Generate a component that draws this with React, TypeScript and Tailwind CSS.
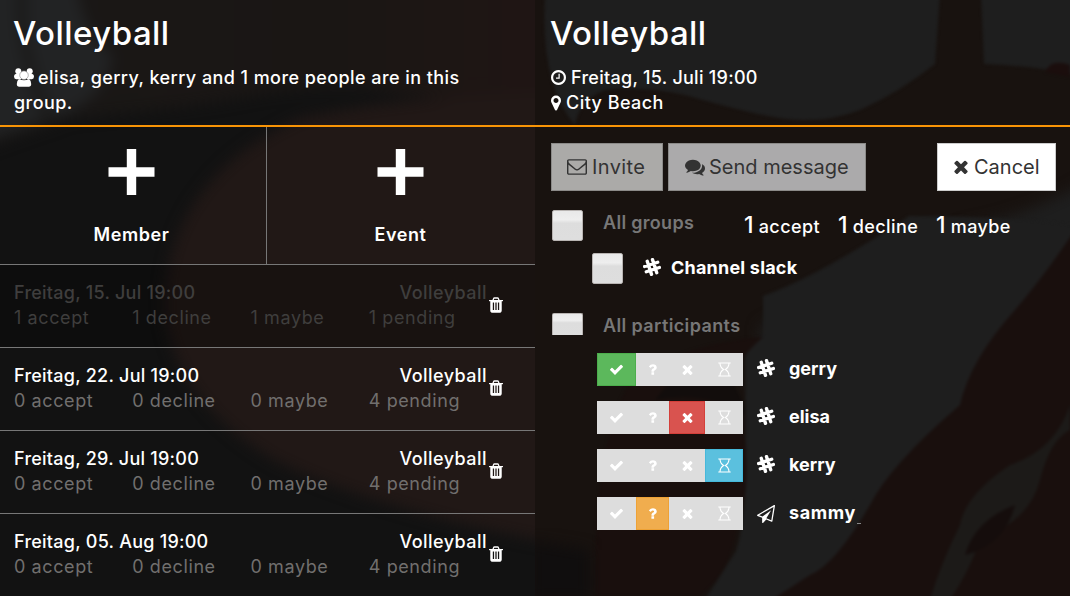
import type { ReactNode } from 'react';

type IconProps = { className?: string };

function Glyph({ d, className, box = '0 0 1792 1792' }: { d: string; className?: string; box?: string }) {
  return (
    <svg viewBox={box} fill="currentColor" className={className} aria-hidden="true">
      <path d={d} />
    </svg>
  );
}

const TIMES =
  'M1490 1322q0 40-28 68l-136 136q-28 28-68 28t-68-28l-294-294-294 294q-28 28-68 28t-68-28l-136-136q-28-28-28-68t28-68l294-294-294-294q-28-28-28-68t28-68l136-136q28-28 68-28t68 28l294 294 294-294q28-28 68-28t68 28l136 136q28 28 28 68t-28 68l-294 294 294 294q28 28 28 68z';
const CHECK =
  'M1671 566q0 40-28 68l-724 724-136 136q-28 28-68 28t-68-28l-136-136-362-362q-28-28-28-68t28-68l136-136q28-28 68-28t68 28l294 295 656-657q28-28 68-28t68 28l136 136q28 28 28 68z';
const QUESTION =
  'M1088 1256v240q0 16-12 28t-28 12h-240q-16 0-28-12t-12-28v-240q0-16 12-28t28-12h240q16 0 28 12t12 28zm316-600q0 54-15.5 101t-35 76.5-55 59.5-57.5 43.5-61 35.5q-41 23-68.5 65t-27.5 67q0 17-12 32.5t-28 15.5h-240q-15 0-25.5-18.5t-10.5-37.5v-45q0-83 65-156.5t143-108.5q59-27 84-56t25-76q0-42-46.5-74t-107.5-32q-65 0-108 29-35 25-107 115-13 16-31 16-12 0-25-8l-164-125q-13-10-15.5-25t5.5-28q160-266 464-266 80 0 161 31t146 83 106 127.5 41 158.5z';
const CLOCK =
  'M1024 544v448q0 14-9 23t-23 9h-320q-14 0-23-9t-9-23v-64q0-14 9-23t23-9h224v-352q0-14 9-23t23-9h64q14 0 23 9t9 23zm416 352q0-148-73-273t-198-198-273-73-273 73-198 198-73 273 73 273 198 198 273 73 273-73 198-198 73-273zm224 0q0 209-103 385.5t-279.5 279.5-385.5 103-385.5-103-279.5-279.5-103-385.5 103-385.5 279.5-279.5 385.5-103 385.5 103 279.5 279.5 103 385.5z';
const MARKER =
  'M1152 640q0-106-75-181t-181-75-181 75-75 181 75 181 181 75 181-75 75-181zm256 0q0 109-33 179l-364 774q-16 33-47.5 52t-67.5 19-67.5-19-46.5-52l-365-774q-33-70-33-179 0-212 150-362t362-150 362 150 150 362z';
const ENVELOPE =
  'M1664 1504v-768q-32 36-69 66-268 206-426 338-51 43-83 67t-86.5 48.5-102.5 24.5h-2q-48 0-102.5-24.5t-86.5-48.5-83-67q-158-132-426-338-37-30-69-66v768q0 13 9.5 22.5t22.5 9.5h1472q13 0 22.5-9.5t9.5-22.5zm0-1051v-24.5l-.5-13-3-12.5-5.5-9-9-7.5-14-2.5h-1472q-13 0-22.5 9.5t-9.5 22.5q0 168 147 284 193 152 401 317 6 5 35 29.5t46 37.5 44.5 31.5 50.5 27.5 43 9h2q20 0 43-9t50.5-27.5 44.5-31.5 46-37.5 35-29.5q208-165 401-317 54-43 100.5-115.5t46.5-131.5zm128-37v1088q0 66-47 113t-113 47h-1472q-66 0-113-47t-47-113v-1088q0-66 47-113t113-47h1472q66 0 113 47t47 113z';
const COMMENTS =
  'M1408 768q0 139-94 257t-256.5 186.5-353.5 68.5q-86 0-176-16-124 88-278 128-36 9-86 16h-3q-11 0-20.5-8t-11.5-21q-1-3-1-6.5t.5-6.5 2-6l2.5-5 3.5-5.5 4-5 4.5-5 4-4.5q5-6 23-25t26-29.5 22.5-29 25-38.5 20.5-44q-124-72-195-177t-71-224q0-139 94-257t256.5-186.5 353.5-68.5 353.5 68.5 256.5 186.5 94 257zm384 256q0 120-71 224.5t-195 176.5q10 24 20.5 44t25 38.5 22.5 29 26 29.5 23 25q1 1 4 4.5t4.5 5 4 5 3.5 5.5l2.5 5 2 6 .5 6.5-1 6.5q-3 14-13 22t-22 7q-50-7-86-16-154-40-278-128-90 16-176 16-271 0-472-132 58 4 88 4 161 0 309-45t264-129q125-92 192-212t67-254q0-77-23-152 129 71 204 178t75 230z';
const TRASH =
  'M704 1376v-704q0-14-9-23t-23-9h-64q-14 0-23 9t-9 23v704q0 14 9 23t23 9h64q14 0 23-9t9-23zm256 0v-704q0-14-9-23t-23-9h-64q-14 0-23 9t-9 23v704q0 14 9 23t23 9h64q14 0 23-9t9-23zm256 0v-704q0-14-9-23t-23-9h-64q-14 0-23 9t-9 23v704q0 14 9 23t23 9h64q14 0 23-9t9-23zm-544-992h448l-48-117q-7-9-17-11h-317q-10 2-17 11zm928 32v64q0 14-9 23t-23 9h-96v948q0 83-47 143.5t-113 60.5h-832q-66 0-113-58.5t-47-141.5v-952h-96q-14 0-23-9t-9-23v-64q0-14 9-23t23-9h309l70-167q15-37 54-63t79-26h320q40 0 79 26t54 63l70 167h309q14 0 23 9t9 23z';
const PLANE =
  'M1764 11q33 24 27 64l-256 1536q-5 29-32 45-14 8-31 8-11 0-24-5l-527-215-298 327q-18 21-47 21-14 0-23-4-19-7-30-23.5t-11-36.5v-452l-472-193q-37-14-40-55-3-39 32-59l1664-960q35-21 68 2zm-342 1499l221-1323-1434 827 336 137 863-639-478 797z';

function SlackIcon({ className }: IconProps) {
  return (
    <svg viewBox="0 0 17 17" className={className} fill="none" stroke="currentColor" strokeWidth="3.2" aria-hidden="true">
      <g transform="rotate(-18 8.5 8.5)" strokeLinecap="round">
        <path d="M5.9 2v13M11.1 2v13M2 5.900h13M2 11.100h13" />
      </g>
    </svg>
  );
}

function HourglassIcon({ className }: IconProps) {
  return (
    <svg viewBox="0 0 13 15" className={className} fill="none" stroke="currentColor" aria-hidden="true">
      <path d="M.3 1h12.4M.3 14h12.4" strokeWidth="1.1" />
      <path d="M2 1c0 3.6 1.2 5 3.6 6.5C3.2 9 2 10.500 2 14M11 1c0 3.600-1.200 5-3.600 6.500C9.800 9 11 10.500 11 14" strokeWidth="1.100" />
    </svg>
  );
}

function PeopleIcon({ className }: IconProps) {
  return (
    <svg viewBox="0 0 20 19" className={className} fill="currentColor" aria-hidden="true">
      <circle cx="4.300" cy="3.200" r="3" />
      <circle cx="15.700" cy="3.200" r="3" />
      <path d="M3 5.500h4v5.800H2.200Q0 11 0 8.500 0 6 3 5.500zM17 5.500h-4v5.800h4.800Q20 11 20 8.500 20 6 17 5.500z" />
      <circle cx="10" cy="7.200" r="4.300" stroke="#888" strokeWidth=".6" />
      <path d="M5 11q5 2.600 10 0 2.200 1.500 2.200 5 0 2.800-2.400 2.800H5.200q-2.400 0-2.400-2.800 0-3.500 2.200-5z" />
    </svg>
  );
}

function PlusIcon({ className }: IconProps) {
  return (
    <svg viewBox="0 0 46 46" className={className} fill="currentColor" aria-hidden="true">
      <path d="M18.300 0h9.400v18.300H46v9.400H27.700V46h-9.400V27.700H0v-9.400h18.300z" />
    </svg>
  );
}

function Backdrop() {
  return (
    <svg
      viewBox="0 0 1070 596"
      className="pointer-events-none absolute inset-0 h-full w-full"
      preserveAspectRatio="none"
      aria-hidden="true"
    >
      <defs>
        <filter id="soft" x="-20%" y="-20%" width="140%" height="140%" colorInterpolationFilters="sRGB">
          <feGaussianBlur stdDeviation="7" />
        </filter>
        <filter id="crisp" x="-10%" y="-10%" width="120%" height="120%" colorInterpolationFilters="sRGB">
          <feGaussianBlur stdDeviation="1.500" />
        </filter>
        <linearGradient id="top" x1="0" x2="1" y1="0" y2="0">
          <stop offset="0" stopColor="#191716" />
          <stop offset=".6" stopColor="#1a1614" />
          <stop offset="1" stopColor="#201514" />
        </linearGradient>
        <clipPath id="left">
          <path d="M0 0h535v596H0z" />
        </clipPath>
        <clipPath id="right">
          <path d="M535 0h535v596H535z" />
        </clipPath>
      </defs>
      <g clipPath="url(#left)">
        <path d="M0 0h535v596H0z" fill="#121212" />
        <g filter="url(#soft)">
          <path d="M-20-20h580v120Q450 103 370 88 300 84 230 100 150 112 70 118L-20 150z" fill="url(#top)" />
          <path d="M-20-20h95q10 60 38 75-5 40-50 60L-20 142z" fill="#222324" />
          <path d="M22-10q-5 60 30 135" stroke="#191817" strokeWidth="8" fill="none" />
          <path d="M560 92Q400 96 300 118 165 180 164 310q10 90 110 150 100 50 286 84z" fill="#211816" />
        </g>
      </g>
      <g clipPath="url(#right)">
        <path d="M535 0h535v596H535z" fill="#18120f" />
        <g filter="url(#crisp)">
          <path
            d="M545-5q-5 90 30 130 4-25 30-35 40-4 80 5 35 10 60 16 40 10 60 9 30 0 55-10 40-18 75-46l5-69zM981-5h100v81q-45-10-97-12z"
            fill="#1e1e1e"
          />
          <path d="M1045 72q6-14 25-7v12z" fill="#1b0e0d" />
        </g>
        <g filter="url(#soft)">
          <path d="M1090 180q-60 35-120 45-80 25-130 55-30 20-80 46v60l190 20 140-150z" fill="#1e1e1e" />
        </g>
        <g filter="url(#crisp)">
          <path
            d="M763 336q-20 8-18 30l1 110q-2 50-10 75l-32 50h75l40-20q30-14 45-35l60-80q30-28 60-60 5-60 50-110l45-70q-70-10-170-10-90 60-146 80z"
            fill="#1e1e1e"
          />
          <path d="M1075 230q-30 45-60 80-45 50-55 95-70 60-90 100-35 60-60 70l-40 26h305z" fill="#190f0d" />
          <path d="M1070 405q-15 45-60 60-45 30-50 60-20 40-30 75h20q20-30 30-60 50-20 60-60 10-40 30-50z" fill="#1c1a18" />
          <path d="M1015 505q-40 15-50 50 40-10 50-50z" fill="#150d0c" />
          <path d="M763 337q-70 5-130 40-40 60-38 219h104q30-20 38-70 20-50-2-140-5-20 28-49z" fill="#190f0d" />
          <path d="M655 400q40-55 75-20 15 20 15 35-40-25-90-15z" fill="#120d0c" />
        </g>
        <path d="M530 540l60 10v50h-60z" fill="#100e0e" filter="url(#soft)" />
      </g>
    </svg>
  );
}

function Header({ className, children }: { className: string; children: ReactNode }) {
  return (
    <header className={`h-[127px] border-b-2 border-[#f89406] pt-[13px] ${className}`}>
      <h1 className="-ml-px h-[52px] text-[33px] leading-[40px] font-medium tracking-[0.45px]">Volleyball</h1>
      {children}
    </header>
  );
}

function AddTile({ label, className }: { label: string; className: string }) {
  return (
    <button className={`flex h-[137px] flex-col items-center pt-[22px] ${className}`}>
      <PlusIcon className="h-[46px] w-[47px]" />
      <span className="mt-[27px] leading-[25px] font-semibold tracking-[0.6px]">{label}</span>
    </button>
  );
}

type EventRow = { date: string; counts: string[]; past?: boolean };

const events: EventRow[] = [
  { date: 'Freitag, 15. Jul 19:00', counts: ['1 accept', '1 decline', '1 maybe', '1 pending'], past: true },
  { date: 'Freitag, 22. Jul 19:00', counts: ['0 accept', '0 decline', '0 maybe', '4 pending'] },
  { date: 'Freitag, 29. Jul 19:00', counts: ['0 accept', '0 decline', '0 maybe', '4 pending'] },
  { date: 'Freitag, 05. Aug 19:00', counts: ['0 accept', '0 decline', '0 maybe', '4 pending'] },
];

function EventItem({ date, counts, past }: EventRow) {
  return (
    <li className={`flex h-[83px] border-t border-[#777] pt-[15px] pl-[14px] ${past ? 'bg-black/25' : ''}`}>
      <div className="w-[473px]">
        <div className={`flex justify-between leading-[25px] ${past ? 'text-[#3f3e3d]' : 'text-white'}`}>
          <span className="tracking-[0.25px]">{date}</span>
          <span className="tracking-[0.45px]">Volleyball</span>
        </div>
        <div
          className={`grid grid-cols-4 leading-[25px] font-normal tracking-[0.6px] ${past ? 'text-[#3f3e3d]' : 'text-[#716f6e]'}`}
        >
          {counts.map((c) => (
            <span key={c}>{c}</span>
          ))}
        </div>
      </div>
      <Glyph d={TRASH} box="192 128 1408 1536" className="mt-[17px] ml-[1.5px] h-[16px] w-[14px]" />
    </li>
  );
}

function Checkbox({ className }: { className: string }) {
  return (
    <span
      className={`shrink-0 rounded-[2px] border border-[#b8b4b2] bg-[linear-gradient(#e9e9e9,#eeeeee_30%,#dddddd_42%,#dedede)] ${className}`}
    />
  );
}

const choices = [
  { key: 'accept', width: 'w-[39px]', on: 'bg-[#5cb85c] border-[#4cae4c]' },
  { key: 'maybe', width: 'w-[33px]', on: 'bg-[#f0ad4e] border-[#eea236]' },
  { key: 'decline', width: 'w-[36px]', on: 'bg-[#d9534f] border-[#d43f3a]' },
  { key: 'pending', width: 'w-[38px]', on: 'bg-[#5bc0de] border-[#46b8da]' },
];

function ChoiceIcon({ name }: { name: string }) {
  if (name === 'accept') return <Glyph d={CHECK} className="size-[15px]" />;
  if (name === 'maybe') return <Glyph d={QUESTION} className="size-[15px]" />;
  if (name === 'decline') return <Glyph d={TIMES} className="size-[15px]" />;
  return <HourglassIcon className="h-[15px] w-[13px]" />;
}

const people = [
  { name: 'gerry', status: 'accept', slack: true },
  { name: 'elisa', status: 'decline', slack: true },
  { name: 'kerry', status: 'pending', slack: true },
  { name: 'sammy', status: 'maybe', slack: false },
];

const totals = [
  { count: 1, label: 'accept', width: 'w-[94px]' },
  { count: 1, label: 'decline', width: 'w-[98px]' },
  { count: 1, label: 'maybe', width: 'w-[90px]' },
];

export default function App() {
  return (
    <div className="relative h-[596px] w-[1070px] overflow-hidden bg-[#121212] font-['Inter','Open_Sans',sans-serif] text-[18px] font-medium text-white">
      <Backdrop />
      <main className="relative grid h-full grid-cols-2">
        <section>
          <Header className="pl-[14px]">
            <p className="w-[480px] leading-[25px] tracking-[0.43px]">
              <PeopleIcon className="mr-[4px] inline-block h-[19px] w-[20px] align-[-3px]" />
              elisa, gerry, kerry and 1 more people are in this group.
            </p>
          </Header>
          <div className="flex">
            <AddTile label="Member" className="w-[267px] border-r border-[#777] pr-[3px]" />
            <AddTile label="Event" className="flex-1 pr-px" />
          </div>
          <ul>
            {events.map((e) => (
              <EventItem key={e.date} {...e} />
            ))}
          </ul>
        </section>

        <section>
          <Header className="pl-[16px]">
            <p className="flex items-center leading-[25px] tracking-[0.28px]">
              <Glyph d={CLOCK} box="128 128 1536 1536" className="mr-[5px] size-[15px]" />
              Freitag, 15. Juli 19:00
            </p>
            <p className="flex items-center leading-[25px] tracking-[0.45px]">
              <Glyph d={MARKER} box="384 128 1024 1536" className="mr-[5px] h-[16px] w-[10px]" />
              City Beach
            </p>
          </Header>

          <div className="flex h-[64px] gap-[5px] pt-[16px] pr-[14px] pl-[16px] text-[20px] font-normal text-[#333]">
            <button className="flex w-[112px] items-center gap-[5px] border border-[#8b8a88] bg-[#abaaa8] pl-[15px] tracking-[0.4px]">
              <Glyph d={ENVELOPE} box="0 256 1792 1408" className="h-[16px] w-[20px]" />
              Invite
            </button>
            <button className="flex w-[198px] items-center gap-[4px] border border-[#8b8a88] bg-[#abaaab] pl-[16px]">
              <Glyph d={COMMENTS} className="size-[20px]" />
              Send message
            </button>
            <button className="ml-auto flex w-[119px] items-center gap-[6px] border border-[#ccc] bg-white pl-[16px]">
              <Glyph d={TIMES} box="302 302 1188 1252" className="h-[14px] w-[14px]" />
              Cancel
            </button>
          </div>

          <div className="flex h-[52px] pl-[17px]">
            <Checkbox className="mt-[19px] h-[31px] w-[31px]" />
            <span className="mt-[19px] ml-[20px] w-[141px] leading-[25px] font-semibold tracking-[0.3px] text-[#777]">
              All groups
            </span>
            <div className="mt-[19px] flex items-baseline leading-[30px]">
              {totals.map((t) => (
                <span key={t.label} className={`tracking-[0.4px] ${t.width}`}>
                  <span className="text-[23px] tracking-normal">{t.count}</span> {t.label}
                </span>
              ))}
            </div>
          </div>
          <div className="flex h-[70px] pl-[57px]">
            <Checkbox className="mt-[10px] h-[31px] w-[31px]" />
            <SlackIcon className="mt-[15px] ml-[20px] h-[18px] w-[18px]" />
            <span className="mt-[12px] ml-[10px] leading-[25px] font-bold tracking-[0.2px]">Channel slack</span>
          </div>
          <div className="flex h-[40px] pl-[17px]">
            <Checkbox className="h-[22px] w-[31px] rounded-b-none border-b-0" />
            <span className="ml-[20px] leading-[25px] font-semibold tracking-[0.38px] text-[#777]">All participants</span>
          </div>
          <ul className="flex flex-col gap-[15px] pl-[62px]">
            {people.map((p) => (
              <li key={p.name} className="flex h-[33px]">
                <div className="flex">
                  {choices.map((c) => (
                    <button
                      key={c.key}
                      className={`flex items-center justify-center border text-white ${c.width} ${
                        p.status === c.key ? c.on : 'border-[#ddd] bg-[#ddd]'
                      }`}
                    >
                      <ChoiceIcon name={c.key} />
                    </button>
                  ))}
                </div>
                {p.slack ? (
                  <SlackIcon className="mt-[6px] ml-[14px] h-[18px] w-[18px]" />
                ) : (
                  <Glyph d={PLANE} className="mt-[8px] ml-[14px] h-[18px] w-[18px]" />
                )}
                <span className={`mt-[3px] ml-[14px] leading-[25px] font-bold ${p.slack ? '' : 'tracking-[0.6px]'}`}>
                  {p.name}
                </span>
                {!p.slack && <span className="mt-[26px] ml-px h-px w-[4px] bg-[#888]" />}
              </li>
            ))}
          </ul>
        </section>
      </main>
    </div>
  );
}
